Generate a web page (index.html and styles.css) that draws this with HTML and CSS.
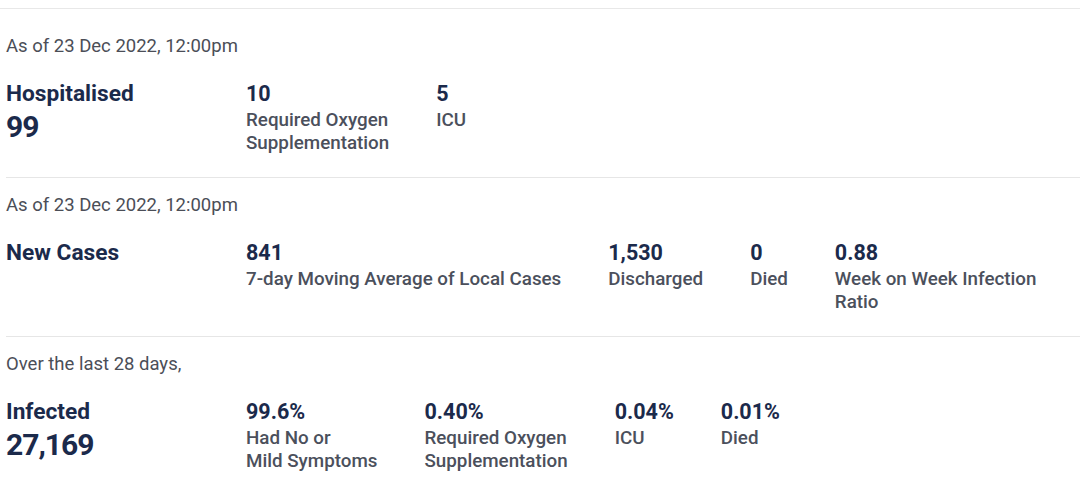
FILE: index.html
```html
<!DOCTYPE html>
<html lang="en">
<head>
<meta charset="utf-8">
<title>COVID-19 Situation</title>
<link rel="stylesheet" href="styles.css">
</head>
<body>
<div class="topbar"></div>
<main class="stats">
  <section class="section">
    <p class="asof">As of 23 Dec 2022, 12:00pm</p>
    <div class="row">
      <div class="lead">
        <h2 class="title">Hospitalised</h2>
        <div class="big">99</div>
      </div>
      <div class="items">
        <div class="item">
          <div class="value">10</div>
          <div class="label">Required Oxygen<br>Supplementation</div>
        </div>
        <div class="item">
          <div class="value">5</div>
          <div class="label">ICU</div>
        </div>
      </div>
    </div>
  </section>

  <section class="section">
    <p class="asof">As of 23 Dec 2022, 12:00pm</p>
    <div class="row">
      <div class="lead">
        <h2 class="title">New Cases</h2>
      </div>
      <div class="items">
        <div class="item">
          <div class="value">841</div>
          <div class="label">7-day Moving Average of Local Cases</div>
        </div>
        <div class="item">
          <div class="value">1,530</div>
          <div class="label">Discharged</div>
        </div>
        <div class="item">
          <div class="value">0</div>
          <div class="label">Died</div>
        </div>
        <div class="item">
          <div class="value">0.88</div>
          <div class="label">Week on Week Infection<br>Ratio</div>
        </div>
      </div>
    </div>
  </section>

  <section class="section">
    <p class="asof">Over the last 28 days,</p>
    <div class="row">
      <div class="lead">
        <h2 class="title">Infected</h2>
        <div class="big">27,169</div>
      </div>
      <div class="items">
        <div class="item">
          <div class="value">99.6%</div>
          <div class="label">Had No or<br>Mild Symptoms</div>
        </div>
        <div class="item">
          <div class="value">0.40%</div>
          <div class="label">Required Oxygen<br>Supplementation</div>
        </div>
        <div class="item">
          <div class="value">0.04%</div>
          <div class="label">ICU</div>
        </div>
        <div class="item">
          <div class="value">0.01%</div>
          <div class="label">Died</div>
        </div>
      </div>
    </div>
  </section>
</main>
</body>
</html>
```
FILE: styles.css
```css
* { box-sizing: border-box; }

html, body {
  margin: 0;
  padding: 0;
  background: #ffffff;
}

body {
  font-family: Roboto, "Liberation Sans", Arial, sans-serif;
  color: #1b2a4b;
  overflow: hidden;
}

.topbar {
  height: 9px;
  border-bottom: 1px solid #e8e8e8;
}

.stats {
  padding-top: 10px;
  margin-left: 6px;
}

.section {
  border-top: 1px solid #e6e6e6;
  padding: 16px 0 22px;
}

.stats .section:first-child {
  border-top: none;
  padding-top: 16px;
}

.asof {
  margin: 0 0 23px;
  font-size: 18.5px;
  line-height: 23px;
  font-weight: 400;
  color: #4b4e57;
}

.row {
  display: flex;
  align-items: flex-start;
}

.lead {
  width: 240px;
  flex: none;
}

.title {
  margin: 0;
  font-size: 22.7px;
  line-height: 26px;
  font-weight: 700;
  color: #1b2a4b;
}

.big {
  margin-top: 3px;
  font-size: 30px;
  line-height: 34px;
  font-weight: 700;
  letter-spacing: -1px;
  color: #1b2a4b;
}

.items {
  display: flex;
  gap: 47px;
}

.item {
  flex: none;
}

.value {
  font-size: 21.5px;
  line-height: 26px;
  font-weight: 700;
  color: #1b2a4b;
}

.label {
  margin-top: 2px;
  font-size: 18.8px;
  line-height: 23px;
  font-weight: 500;
  color: #4b505c;
}
```
